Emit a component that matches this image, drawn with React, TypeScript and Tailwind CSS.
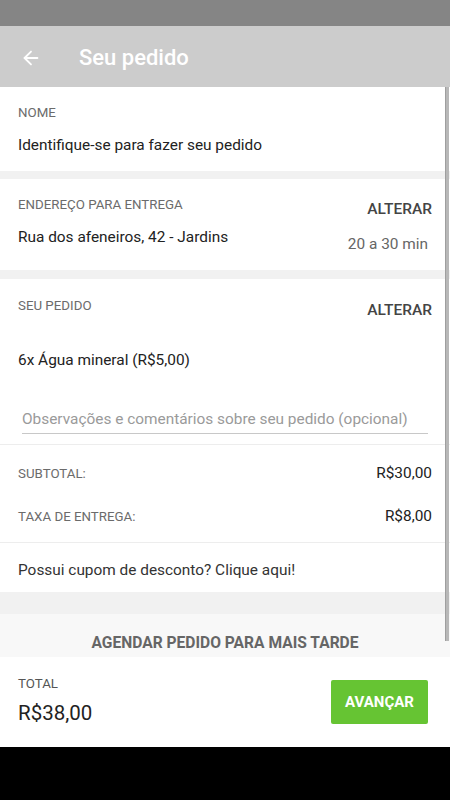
import { ArrowLeft } from 'lucide-react';

const font = { fontFamily: 'Roboto, "Noto Sans", sans-serif' };

function Label({ children }: { children: React.ReactNode }) {
  return <span className="text-[13.3px] leading-none text-[#6b6b6b]">{children}</span>;
}

export default function App() {
  return (
    <div className="flex h-[800px] w-[450px] flex-col overflow-hidden bg-black" style={font}>
      {/* status bar */}
      <div className="h-[26px] shrink-0 bg-[#858585]" />

      {/* toolbar */}
      <div className="flex h-[61px] shrink-0 items-center bg-[#cccccc] pt-[2px] text-white">
        <ArrowLeft className="ml-[20px] h-[22px] w-[22px]" strokeWidth={2} />
        <h1 className="ml-[37px] text-[22px] font-medium">Seu pedido</h1>
      </div>

      {/* scroll area */}
      <div className="relative flex flex-1 flex-col overflow-hidden bg-[#f1f1f1]">
        {/* nome */}
        <div className="flex h-[84px] shrink-0 flex-col bg-white px-[18px] pt-[19px]">
          <Label>NOME</Label>
          <span className="mt-[19px] text-[15.4px] leading-none text-[#222]">Identifique-se para fazer seu pedido</span>
        </div>

        {/* endereço */}
        <div className="mt-[8px] flex h-[91px] shrink-0 bg-white px-[18px] pt-[19px]">
          <div className="flex flex-1 flex-col">
            <Label>ENDEREÇO PARA ENTREGA</Label>
            <span className="mt-[19px] text-[15.4px] leading-none text-[#222]">Rua dos afeneiros, 42 - Jardins</span>
          </div>
          <div className="flex flex-col items-end">
            <span className="mt-[4px] text-[15.5px] font-medium leading-none text-[#444]">ALTERAR</span>
            <span className="mr-[4px] mt-[19px] text-[15.4px] leading-none text-[#666]">20 a 30 min</span>
          </div>
        </div>

        {/* seu pedido */}
        <div className="mt-[9px] flex h-[313px] shrink-0 flex-col bg-white">
          <div className="flex px-[18px] pt-[20px]">
            <div className="flex flex-1 flex-col">
              <Label>SEU PEDIDO</Label>
              <span className="mt-[41px] text-[15.4px] leading-none text-[#222]">6x Água mineral (R$5,00)</span>
            </div>
            <span className="mt-[4px] text-[15.5px] font-medium leading-none text-[#444]">ALTERAR</span>
          </div>
          <div className="mx-[22px] mt-[43px] border-b border-[#c8c8c8] pb-[6px] text-[15.4px] leading-none text-[#9a9a9a]">
            Observações e comentários sobre seu pedido (opcional)
          </div>
          <div className="mt-[10px] border-t border-[#ededed] px-[18px]">
            <div className="flex items-center justify-between pt-[21px]">
              <Label>SUBTOTAL:</Label>
              <span className="text-[15.4px] leading-none text-[#222]">R$30,00</span>
            </div>
            <div className="flex items-center justify-between pt-[27px]">
              <Label>TAXA DE ENTREGA:</Label>
              <span className="text-[15.4px] leading-none text-[#222]">R$8,00</span>
            </div>
          </div>
          <div className="mt-[18px] border-t border-[#ededed] px-[18px] pt-[15px]">
            <span className="text-[15.4px] leading-none text-[#333]">Possui cupom de desconto? Clique aqui!</span>
          </div>
        </div>

        {/* agendar */}
        <div className="mt-[22px] flex h-[60px] shrink-0 justify-center bg-[#f8f8f8] pt-[22px]">
          <span className="text-[15.6px] font-bold leading-none text-[#666]">AGENDAR PEDIDO PARA MAIS TARDE</span>
        </div>

        {/* scrollbar */}
        <div className="absolute right-[1px] top-0 h-[554px] w-[4px] border-l border-[#9f9f9f] bg-[#b8b8b8]" />
      </div>

      {/* total */}
      <div className="flex h-[90px] shrink-0 items-center justify-between bg-white px-[18px] shadow-[0_-1px_3px_rgba(0,0,0,0.12)]">
        <div className="flex flex-col pb-[4px]">
          <span className="text-[13.3px] leading-none text-[#555]">TOTAL</span>
          <span className="mt-[13px] text-[20.5px] leading-none text-[#222]">R$38,00</span>
        </div>
        <button className="mr-[4px] h-[44px] w-[97px] rounded-[2px] bg-[#66c433] text-[15px] font-bold text-white">
          AVANÇAR
        </button>
      </div>

      {/* nav bar */}
      <div className="h-[53px] shrink-0 bg-black" />
    </div>
  );
}
